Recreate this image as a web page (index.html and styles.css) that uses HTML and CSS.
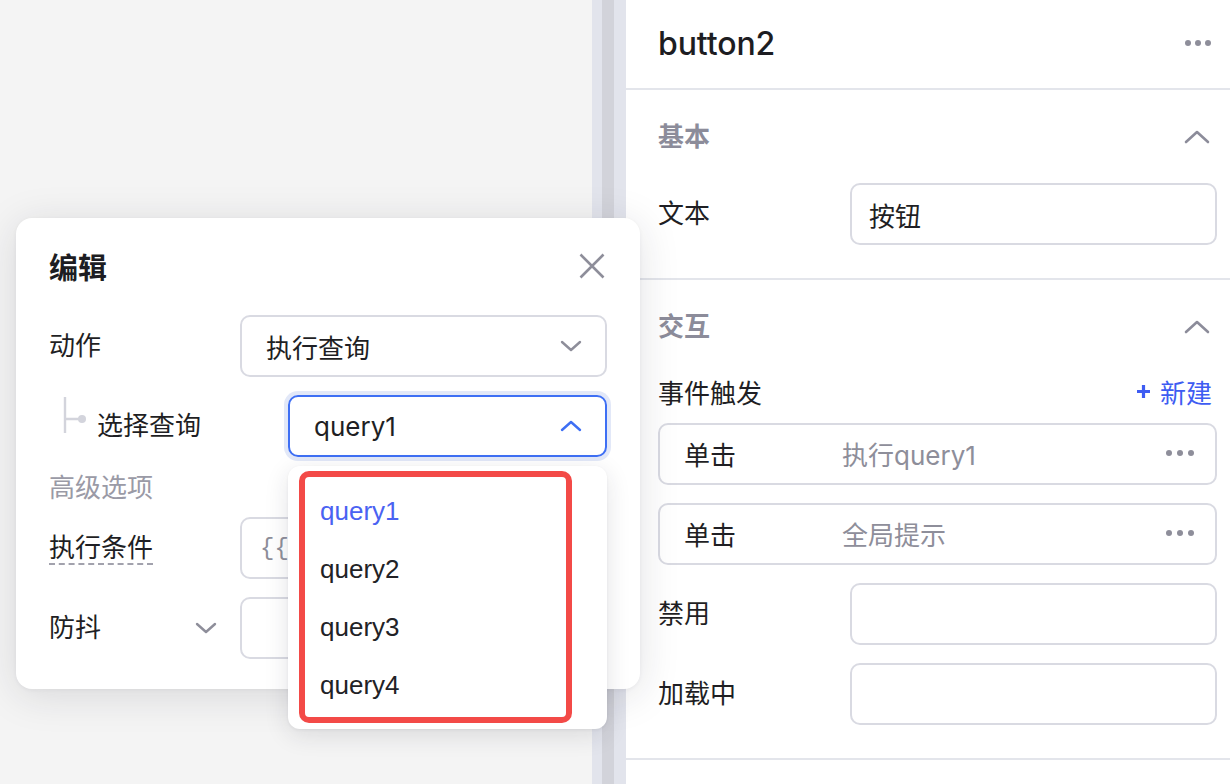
FILE: index.html
```html
<!DOCTYPE html>
<html lang="zh-CN">
<head>
<meta charset="utf-8">
<title>button2</title>
<link rel="stylesheet" href="styles.css">
</head>
<body>
<div class="app">
  <main class="canvas"></main>
  <div class="splitter"><div class="splitter-grip"></div></div>
  <aside class="inspector">
    <header class="insp-header">
      <h1 class="insp-title">button2</h1>
      <svg class="dots" width="28" height="8" viewBox="0 0 28 8"><circle cx="4" cy="4" r="3"/><circle cx="14" cy="4" r="3"/><circle cx="24" cy="4" r="3"/></svg>
    </header>
    <section class="section">
      <div class="section-head">
        <h2 class="section-title">基本</h2>
        <svg class="chev-up" width="26" height="14" viewBox="0 0 26 14"><polyline points="2,12 13,2 24,12"/></svg>
      </div>
      <div class="field">
        <span class="field-label">文本</span>
        <div class="input">按钮</div>
      </div>
    </section>
    <section class="section">
      <div class="section-head">
        <h2 class="section-title">交互</h2>
        <svg class="chev-up" width="26" height="14" viewBox="0 0 26 14"><polyline points="2,12 13,2 24,12"/></svg>
      </div>
      <div class="event-head">
        <span>事件触发</span>
        <span class="add-link"><svg width="15" height="15" viewBox="0 0 15 15"><path d="M7.5 1v13M1 7.5h13"/></svg>新建</span>
      </div>
      <div class="stack">
        <div class="event">
          <span>单击</span>
          <span class="event-action">执行query1</span>
          <svg class="dots" width="30" height="8" viewBox="0 0 30 8"><circle cx="4" cy="4" r="3"/><circle cx="15" cy="4" r="3"/><circle cx="26" cy="4" r="3"/></svg>
        </div>
        <div class="event">
          <span>单击</span>
          <span class="event-action">全局提示</span>
          <svg class="dots" width="30" height="8" viewBox="0 0 30 8"><circle cx="4" cy="4" r="3"/><circle cx="15" cy="4" r="3"/><circle cx="26" cy="4" r="3"/></svg>
        </div>
        <div class="field">
          <span class="field-label">禁用</span>
          <div class="input"></div>
        </div>
        <div class="field">
          <span class="field-label">加载中</span>
          <div class="input"></div>
        </div>
      </div>
    </section>
  </aside>

  <div class="dialog">
    <div class="dialog-head">
      <h2 class="dialog-title">编辑</h2>
      <svg class="close" width="26" height="26" viewBox="0 0 26 26"><path d="M1.5 1.5l23 23M24.5 1.5l-23 23"/></svg>
    </div>
    <div class="dlg-row">
      <span class="dlg-label">动作</span>
      <div class="select">
        <span>执行查询</span>
        <svg class="chev" width="22" height="12" viewBox="0 0 22 12"><polyline points="2,2 11,10 20,2"/></svg>
      </div>
    </div>
    <div class="dlg-row dlg-row-sub">
      <span class="dlg-label sub-label">
        <svg class="tree" width="48" height="62" viewBox="0 0 48 62"><path d="M16 2v36M16 24h14"/><circle cx="33" cy="24" r="4"/></svg>
        选择查询
      </span>
      <div class="select select-focus">
        <span>query1</span>
        <svg class="chev chev-blue" width="22" height="12" viewBox="0 0 22 12"><polyline points="2,10 11,2 20,10"/></svg>
      </div>
    </div>
    <div class="dlg-group">高级选项</div>
    <div class="dlg-row">
      <span class="dlg-label"><span class="dashed">执行条件</span></span>
      <div class="select"><span class="code">{{</span></div>
    </div>
    <div class="dlg-row row-last">
      <span class="dlg-label label-toggle">防抖
        <svg class="chev" width="22" height="12" viewBox="0 0 22 12"><polyline points="2,2 11,10 20,2"/></svg>
      </span>
      <div class="select"></div>
    </div>
  </div>

  <div class="popover">
    <ul class="options">
      <li class="option active">query1</li>
      <li class="option">query2</li>
      <li class="option">query3</li>
      <li class="option">query4</li>
    </ul>
  </div>
</div>
</body>
</html>
```

FILE: styles.css
```css
* { box-sizing: border-box; }
html, body { margin: 0; padding: 0; }
body {
  font-family: Inter, "Noto Sans CJK SC", sans-serif;
  color: #1f1f24;
  overflow: hidden;
  background: #fff;
}
h1, h2 { margin: 0; font-weight: inherit; }
ul { margin: 0; padding: 0; list-style: none; }

.app {
  position: relative;
  display: flex;
  width: 1230px;
  height: 784px;
}

.canvas {
  flex: 1;
  background: #f4f4f4;
}

.splitter {
  width: 34px;
  background: #e2e4ec;
  padding-left: 10px;
}
.splitter-grip {
  width: 12px;
  height: 100%;
  background: #d2d3da;
}

.inspector {
  width: 604px;
  background: #fff;
  display: flex;
  flex-direction: column;
}

.insp-header {
  height: 90px;
  border-bottom: 2px solid #e3e5eb;
  padding: 0 18px 2px 32px;
  display: flex;
  align-items: center;
  justify-content: space-between;
}
.insp-title {
  font-family: Inter, sans-serif;
  font-size: 32px;
  font-weight: 500;
  color: #1d1d22;
  letter-spacing: -0.1px;
}
.dots { fill: #8e8e9a; }

.section {
  padding: 29px 13px 33px 32px;
  border-bottom: 2px solid #e3e5eb;
}
.section-head {
  height: 36px;
  display: flex;
  align-items: center;
  justify-content: space-between;
  margin-bottom: 28px;
}
.section-title {
  font-size: 26px;
  font-weight: 600;
  color: #8c8c9a;
  line-height: 36px;
}
.chev-up {
  margin-right: 7px;
  fill: none;
  stroke: #8c8c9a;
  stroke-width: 2.6;
  stroke-linecap: round;
  stroke-linejoin: round;
}

.field {
  display: grid;
  grid-template-columns: 192px 1fr;
  align-items: center;
  font-size: 26px;
}
.field-label { line-height: 36px; color: #1f1f24; }
.input {
  height: 62px;
  border: 2px solid #d9dae2;
  border-radius: 10px;
  padding: 0 17px;
  display: flex;
  align-items: center;
  font-size: 26px;
  color: #1f1f24;
}

.event-head {
  height: 36px;
  display: flex;
  align-items: center;
  justify-content: space-between;
  font-size: 26px;
  margin-bottom: 14px;
}
.add-link {
  display: flex;
  align-items: center;
  gap: 9px;
  color: #3e5cf2;
  margin-right: 5px;
}
.add-link svg {
  fill: none;
  stroke: #3e5cf2;
  stroke-width: 3.2;
}

.stack {
  display: flex;
  flex-direction: column;
  gap: 18px;
}
.event {
  height: 62px;
  border: 2px solid #d9dae2;
  border-radius: 10px;
  display: grid;
  grid-template-columns: 158px 1fr auto;
  align-items: center;
  padding: 0 20px 2px 24px;
  font-size: 26px;
}
.event-action { color: #8e8e9a; }

/* dialog overlay */
.dialog {
  position: absolute;
  left: 16px;
  top: 218px;
  width: 624px;
  background: #fff;
  border-radius: 16px;
  padding: 30px 33px 30px 33px;
  box-shadow: 0 6px 40px rgba(30, 30, 50, 0.13), 0 1px 4px rgba(30, 30, 50, 0.05);
  display: flex;
  flex-direction: column;
}
.dialog-head {
  height: 36px;
  display: flex;
  align-items: center;
  justify-content: space-between;
  margin-bottom: 31px;
}
.dialog-title {
  font-size: 29px;
  font-weight: 700;
  color: #1d1d22;
}
.close {
  margin-right: 2px;
  fill: none;
  stroke: #8e8e9a;
  stroke-width: 2.6;
}

.dlg-row {
  display: grid;
  grid-template-columns: 191px 1fr;
  align-items: center;
  font-size: 26px;
  margin-bottom: 18px;
}
.dlg-row-sub { grid-template-columns: 239px 1fr; margin-bottom: 13px; }
.row-last { margin-bottom: 0; }
.dlg-label { line-height: 36px; color: #1f1f24; }
.sub-label {
  display: flex;
  align-items: center;
}
.tree path { fill: none; stroke: #d3d4dc; stroke-width: 2.4; }
.tree circle { fill: #d3d4dc; }

.select {
  height: 62px;
  border: 2px solid #d9dae2;
  border-radius: 10px;
  padding: 0 23px 0 24px;
  display: flex;
  align-items: center;
  justify-content: space-between;
  font-size: 26px;
  color: #1f1f24;
}
.select-focus {
  border-color: #3e6ff4;
  box-shadow: 0 0 0 4px #e2e8f8;
}
.chev {
  fill: none;
  stroke: #8e8e9a;
  stroke-width: 2.4;
  stroke-linecap: round;
  stroke-linejoin: round;
}
.chev-blue { stroke: #3e6ff4; }

.dlg-group {
  height: 36px;
  line-height: 36px;
  font-size: 26px;
  color: #9a9aa6;
  margin-bottom: 11px;
}
.dashed {
  display: inline-block;
  line-height: 30px;
  border-bottom: 2px dashed #a2a2ad;
}
.code {
  font-family: "Liberation Mono", monospace;
  font-size: 24px;
  color: #8e8e9a;
  margin-left: -6px;
}
.label-toggle {
  display: flex;
  align-items: center;
  justify-content: space-between;
  padding-right: 23px;
}

/* dropdown overlay */
.popover {
  position: absolute;
  left: 288px;
  top: 466px;
  width: 319px;
  height: 263px;
  background: #fff;
  border-radius: 12px;
  padding: 5px 35px 6px 11px;
  box-shadow: 0 6px 24px rgba(30, 30, 50, 0.12), 0 1px 3px rgba(30, 30, 50, 0.06);
}
.options {
  height: 252px;
  border: 6px solid #f34a47;
  border-radius: 10px;
  padding-top: 5px;
}
.option {
  height: 58px;
  line-height: 58px;
  padding-left: 15px;
  font-family: "Liberation Sans", sans-serif;
  font-size: 26px;
  color: #222226;
}
.option.active { color: #4a62f2; }
```
